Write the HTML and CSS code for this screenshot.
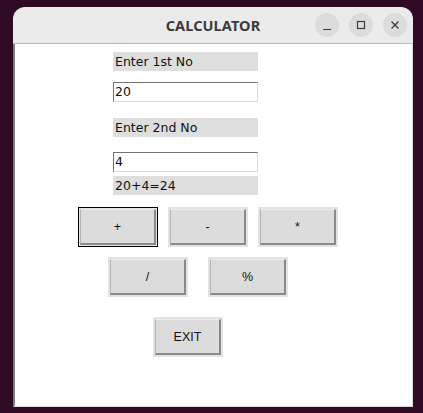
FILE: index.html
```html
<!DOCTYPE html>
<html>
<head>
<meta charset="utf-8">
<link rel="stylesheet" href="styles.css">
</head>
<body>
<div class="window">
  <div class="titlebar">
    <div class="title">CALCULATOR</div>
    <div class="controls">
      <span class="ctl"><svg width="24" height="24" viewBox="0 0 24 24"><path d="M8 16.5h8" stroke="#3a3a3a" stroke-width="1.2"/></svg></span>
      <span class="ctl"><svg width="24" height="24" viewBox="0 0 24 24"><rect x="8.5" y="8.5" width="7" height="7" fill="none" stroke="#3a3a3a" stroke-width="1.2"/></svg></span>
      <span class="ctl"><svg width="24" height="24" viewBox="0 0 24 24"><path d="M8.5 8.5l7 7M15.5 8.5l-7 7" stroke="#3a3a3a" stroke-width="1.3"/></svg></span>
    </div>
  </div>
  <div class="content">
    <div class="fields">
      <div class="label l1">Enter 1st No</div>
      <div class="entry e1">20</div>
      <div class="label l2">Enter 2nd No</div>
      <div class="entry e2">4</div>
      <div class="label l3">20+4=24</div>
    </div>
    <div class="row row1">
      <div class="btn focus"><span>+</span></div>
      <div class="btn"><span>-</span></div>
      <div class="btn"><span>*</span></div>
    </div>
    <div class="row row2">
      <div class="btn"><span>/</span></div>
      <div class="btn"><span>%</span></div>
    </div>
    <div class="row row3">
      <div class="btn exit"><span>EXIT</span></div>
    </div>
  </div>
</div>
</body>
</html>
```
FILE: styles.css
```css
html, body {
  margin: 0;
  padding: 0;
}
body {
  width: 423px;
  height: 413px;
  background: #2f0a24;
  overflow: hidden;
}
.window {
  margin-left: 13px;
  margin-top: 7px;
  width: 400px;
  height: 400px;
  border-radius: 12px 12px 0 0;
  background: #ebebeb;
  overflow: hidden;
  display: flex;
  flex-direction: column;
}
.titlebar {
  height: 36px;
  border-bottom: 1px solid #bcbcbc;
  position: relative;
  display: flex;
  align-items: center;
  justify-content: center;
}
.title {
  font-family: "Noto Sans", "DejaVu Sans", sans-serif;
  font-weight: bold;
  font-size: 14.5px;
  color: #3b3b3b;
  letter-spacing: 0.1px;
}
.controls {
  position: absolute;
  right: 6px;
  top: 6px;
  display: flex;
  gap: 10px;
}
.ctl {
  width: 24px;
  height: 24px;
  border-radius: 50%;
  background: #dcdcdc;
  display: block;
}
.ctl svg { display: block; }
.content {
  flex: 1;
  background: #fff;
  border-left: 2px solid #7d7d7d;
  border-right: 1px solid #d9d9d9;
  border-bottom: 1px solid #d9d9d9;
}
.fields {
  margin-left: 98px;
  padding-top: 8px;
  width: 145px;
  display: flex;
  flex-direction: column;
}
.label {
  height: 19px;
  background: #dedede;
  font-family: "DejaVu Sans", sans-serif;
  font-size: 12.5px;
  line-height: 19px;
  color: #111;
  padding-left: 2px;
}
.entry {
  height: 20px;
  box-sizing: border-box;
  background: #fff;
  border-top: 1px solid #737373;
  border-left: 1px solid #737373;
  border-right: 1px solid #dcdcdc;
  border-bottom: 1px solid #dcdcdc;
  font-family: "DejaVu Sans", sans-serif;
  font-size: 12.5px;
  line-height: 18px;
  color: #111;
  padding-left: 1px;
}
.e1 { margin-top: 11px; }
.l2 { margin-top: 16px; }
.e2 { margin-top: 15px; }
.l3 { margin-top: 4px; }
.row {
  display: flex;
}
.row1 { margin-left: 63px; margin-top: 12px; gap: 10px; }
.row2 { margin-left: 93px; margin-top: 10px; gap: 20px; }
.row3 { margin-left: 138px; margin-top: 20px; }
.btn {
  width: 80px;
  height: 40px;
  box-sizing: border-box;
  border: 2px solid #e3e3e3;
  background: #dcdcdc;
  display: flex;
}
.btn.focus {
  border: 1px solid #000;
  padding: 1px;
  background: #e3e3e3;
}
.btn.exit { width: 70px; }
.btn span {
  flex: 1;
  display: flex;
  align-items: center;
  justify-content: center;
  background: #dcdcdc;
  border-top: 1px solid #ececec;
  border-left: 1px solid #b4b4b4;
  border-right: 2px solid #8a8a8a;
  border-bottom: 2px solid #8a8a8a;
  font-family: "Liberation Sans", Arial, sans-serif;
  font-size: 12.5px;
  color: #111;
}
```
